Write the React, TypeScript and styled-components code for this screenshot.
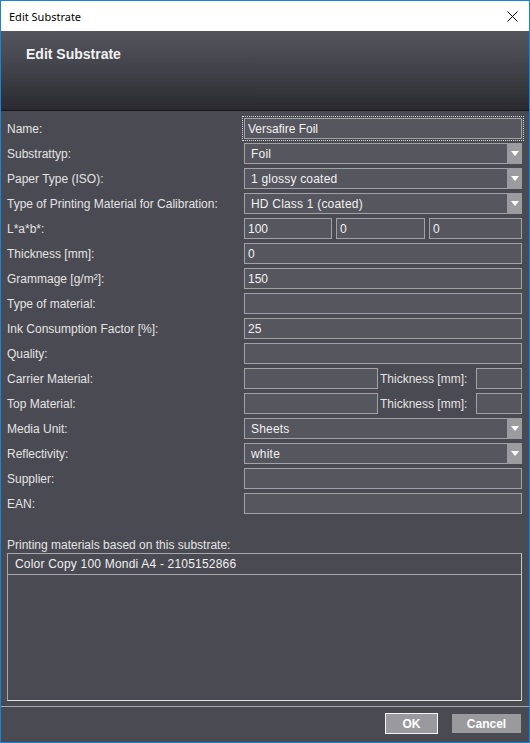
import React from "react";
import styled, { createGlobalStyle } from "styled-components";

const Global = createGlobalStyle`
  html, body { margin: 0; padding: 0; background: #ffffff; }
  * { box-sizing: border-box; }
`;

const Window = styled.div`
  width: 530px;
  height: 743px;
  border: 1px solid #1883d7;
  display: flex;
  flex-direction: column;
  background: #4a4a52;
  font-family: "Liberation Sans", Arial, sans-serif;
  font-size: 12px;
  color: #e6e6e6;
  overflow: hidden;
`;

const TitleBar = styled.div`
  height: 30px;
  flex: none;
  background: #ffffff;
  display: flex;
  align-items: center;
  justify-content: space-between;
  padding: 0 10px 0 8px;
  font-family: "Noto Sans", "Open Sans", sans-serif;
  font-size: 11px;
  color: #000000;
`;

const CloseButton = styled.div`
  width: 12px;
  height: 12px;
  display: flex;
  align-items: center;
  justify-content: center;
  margin-right: 1px;
`;

const Header = styled.div`
  height: 80px;
  flex: none;
  background: linear-gradient(to bottom, #54555d 0%, #43444b 45%, #2a2a30 100%);
  border-bottom: 1px solid #18181c;
  padding: 15px 0 0 25px;
`;

const HeaderTitle = styled.div`
  font-family: "Liberation Sans", Arial, sans-serif;
  font-weight: bold;
  font-size: 14px;
  line-height: 16px;
  color: #f2f2f2;
`;

const Form = styled.div`
  flex: none;
  display: grid;
  grid-template-columns: 237px 278px;
  row-gap: 4px;
  padding: 7px 7px 0 6px;
`;

const Label = styled.div`
  height: 21px;
  display: flex;
  align-items: center;
  white-space: nowrap;
  color: #e4e4e4;
`;

const Field = styled.div<{ $focused?: boolean; $width?: number }>`
  height: 21px;
  border: 1px solid #a2a2a6;
  background: #56565e;
  color: #f2f2f2;
  display: flex;
  align-items: center;
  padding-left: 3px;
  white-space: nowrap;
  overflow: hidden;
  ${(p) => (p.$width ? `width: ${p.$width}px; flex: none;` : "")}
  ${(p) => (p.$focused ? "outline: 1px dotted #d8d8d8; outline-offset: 1px;" : "")}
`;

const SelectBox = styled.div`
  height: 21px;
  border: 1px solid #a2a2a6;
  background: #56565e;
  color: #f2f2f2;
  display: flex;
  align-items: stretch;
`;

const SelectText = styled.div`
  flex: 1;
  display: flex;
  align-items: center;
  padding-left: 6px;
  letter-spacing: 0.2px;
`;

const SelectArrow = styled.div`
  width: 15px;
  flex: none;
  background: #9c9ca0;
  display: flex;
  align-items: center;
  justify-content: center;
  margin: -1px -1px -1px 0;
`;

const Triangle = styled.div`
  width: 0;
  height: 0;
  border-left: 4px solid transparent;
  border-right: 4px solid transparent;
  border-top: 5px solid #ffffff;
`;

const LabRow = styled.div`
  display: grid;
  grid-template-columns: 88px 89px 1fr;
  column-gap: 4px;
`;

const ThicknessRow = styled.div`
  display: flex;
  align-items: center;
`;

const InlineLabel = styled.span`
  margin-left: 2px;
  flex: 1;
  white-space: nowrap;
  color: #e4e4e4;
`;

const ListSection = styled.div`
  flex: 1;
  display: flex;
  flex-direction: column;
  padding: 24px 7px 5px 6px;
  min-height: 0;
`;

const ListLabel = styled.div`
  line-height: 15px;
  color: #e4e4e4;
`;

const ListBox = styled.div`
  flex: 1;
  border: 1px solid #a8a8ac;
  border-bottom-color: #e2e2e2;
  border-right-color: #c8c8cc;
`;

const ListItem = styled.div`
  height: 21px;
  border-bottom: 1px solid #a8a8ac;
  display: flex;
  align-items: center;
  padding-left: 7px;
  color: #f0f0f0;
  letter-spacing: 0.2px;
`;

const Footer = styled.div`
  height: 36px;
  flex: none;
  border-top: 1px solid #a8a8ac;
  display: flex;
  align-items: flex-start;
  justify-content: flex-end;
  padding: 6px 8px 0 0;
  gap: 14px;
`;

const Button = styled.div<{ $default?: boolean; $w: number }>`
  width: ${(p) => p.$w}px;
  height: ${(p) => (p.$default ? 21 : 19)}px;
  margin-top: ${(p) => (p.$default ? 0 : 1)}px;
  background: #9a9a9e;
  border: ${(p) => (p.$default ? "1px solid #f4f4f4" : "none")};
  color: #ffffff;
  font-weight: bold;
  font-size: 12px;
  display: flex;
  align-items: center;
  justify-content: center;
`;

function Select({ value }: { value: string }) {
  return (
    <SelectBox>
      <SelectText>{value}</SelectText>
      <SelectArrow>
        <Triangle />
      </SelectArrow>
    </SelectBox>
  );
}

function ThicknessField() {
  return (
    <ThicknessRow>
      <Field $width={134} />
      <InlineLabel>Thickness [mm]:</InlineLabel>
      <Field $width={46} />
    </ThicknessRow>
  );
}

export default function App() {
  return (
    <>
      <Global />
      <Window>
        <TitleBar>
          <span>Edit Substrate</span>
          <CloseButton>
            <svg width="11" height="11" viewBox="0 0 11 11">
              <path d="M0.5 0.5 L10.5 10.5 M10.5 0.5 L0.5 10.5" stroke="#000" strokeWidth="1" />
            </svg>
          </CloseButton>
        </TitleBar>
        <Header>
          <HeaderTitle>Edit Substrate</HeaderTitle>
        </Header>
        <Form>
          <Label>Name:</Label>
          <Field $focused>Versafire Foil</Field>

          <Label>Substrattyp:</Label>
          <Select value="Foil" />

          <Label>Paper Type (ISO):</Label>
          <Select value="1 glossy coated" />

          <Label>Type of Printing Material for Calibration:</Label>
          <Select value="HD Class 1 (coated)" />

          <Label>L*a*b*:</Label>
          <LabRow>
            <Field>100</Field>
            <Field>0</Field>
            <Field>0</Field>
          </LabRow>

          <Label>Thickness [mm]:</Label>
          <Field>0</Field>

          <Label>Grammage [g/m²]:</Label>
          <Field>150</Field>

          <Label>Type of material:</Label>
          <Field />

          <Label>Ink Consumption Factor [%]:</Label>
          <Field>25</Field>

          <Label>Quality:</Label>
          <Field />

          <Label>Carrier Material:</Label>
          <ThicknessField />

          <Label>Top Material:</Label>
          <ThicknessField />

          <Label>Media Unit:</Label>
          <Select value="Sheets" />

          <Label>Reflectivity:</Label>
          <Select value="white" />

          <Label>Supplier:</Label>
          <Field />

          <Label>EAN:</Label>
          <Field />
        </Form>
        <ListSection>
          <ListLabel>Printing materials based on this substrate:</ListLabel>
          <ListBox>
            <ListItem>Color Copy 100 Mondi A4 - 2105152866</ListItem>
          </ListBox>
        </ListSection>
        <Footer>
          <Button $default $w={53}>OK</Button>
          <Button $w={69}>Cancel</Button>
        </Footer>
      </Window>
    </>
  );
}
